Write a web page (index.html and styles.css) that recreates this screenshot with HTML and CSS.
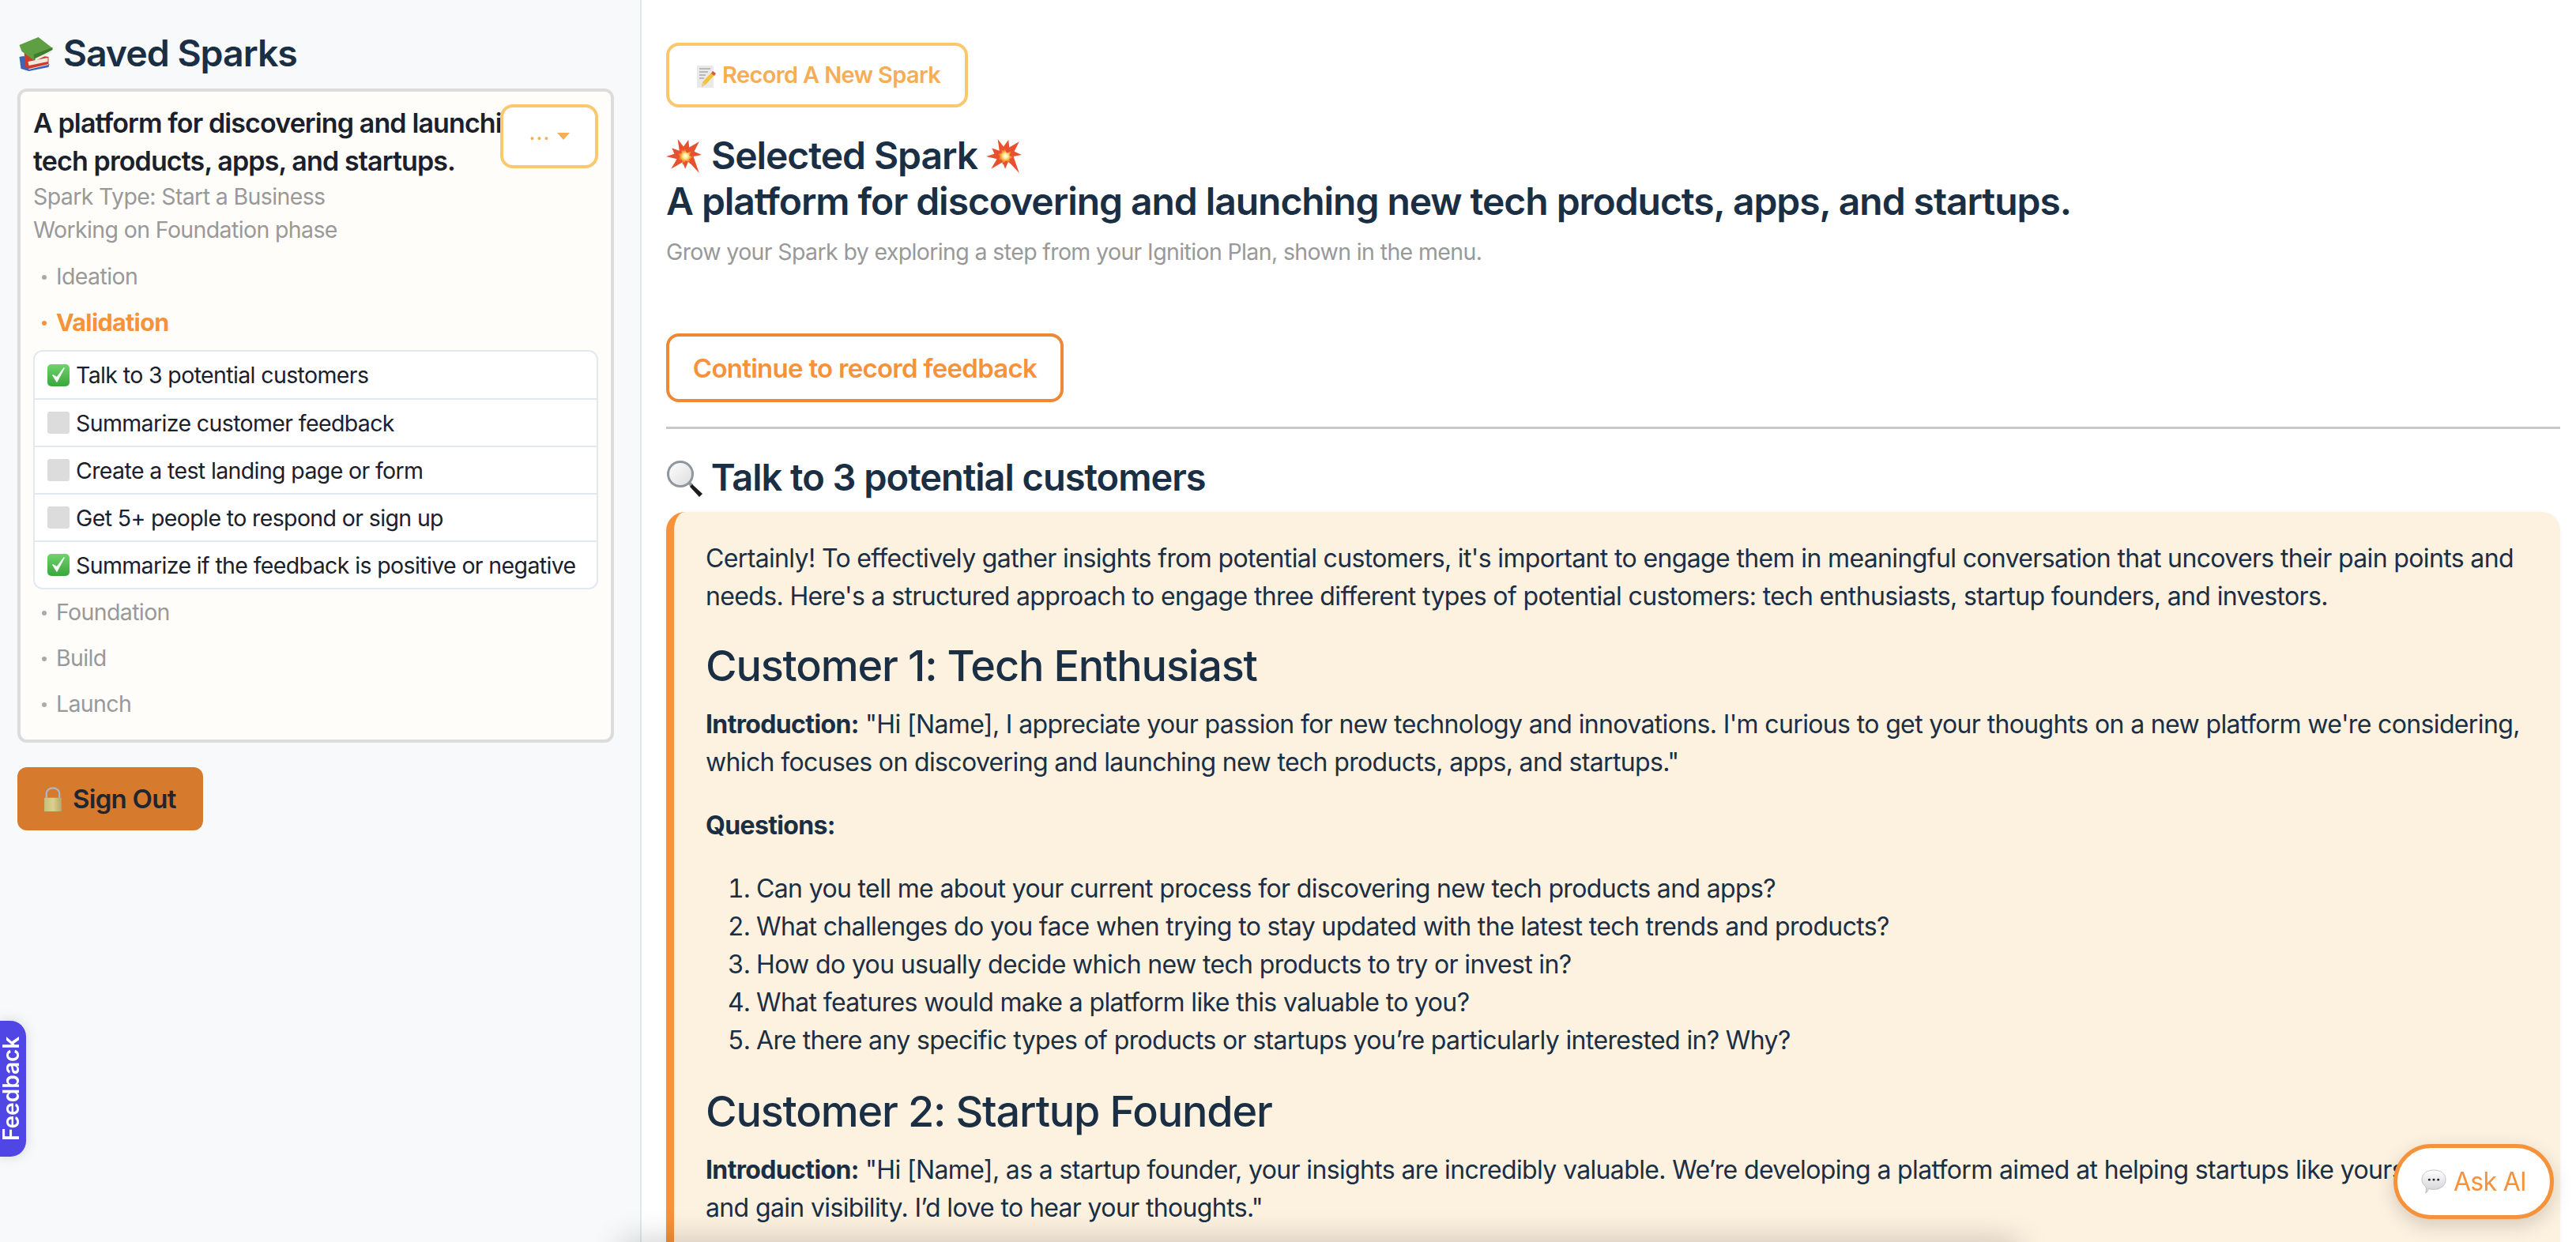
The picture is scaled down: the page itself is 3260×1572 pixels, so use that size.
FILE: index.html
```html
<!DOCTYPE html>
<html lang="en">
<head>
<meta charset="utf-8">
<title>Saved Sparks</title>
<link rel="stylesheet" href="styles.css">
</head>
<body>
<svg class="sprite" width="0" height="0" aria-hidden="true">
  <defs>
    <linearGradient id="brass" x1="0" x2="1" y1="0" y2="0"><stop offset="0" stop-color="#c9bd7c"/><stop offset=".5" stop-color="#dcd08f"/><stop offset="1" stop-color="#b5a765"/></linearGradient>
    <linearGradient id="glass" x1="0" x2="1" y1="0" y2="1"><stop offset="0" stop-color="#ffffff"/><stop offset="1" stop-color="#dcdcdc"/></linearGradient>
    <linearGradient id="green" x1="0" x2="0" y1="0" y2="1"><stop offset="0" stop-color="#6fd36b"/><stop offset="1" stop-color="#39a63b"/></linearGradient>
    <linearGradient id="bubble" x1="0" x2="0" y1="0" y2="1"><stop offset="0" stop-color="#ffffff"/><stop offset="1" stop-color="#cfcfd4"/></linearGradient>
    <radialGradient id="blast"><stop offset="0" stop-color="#ffffff"/><stop offset=".3" stop-color="#ffe98a"/><stop offset=".6" stop-color="#f7932f"/><stop offset="1" stop-color="#dd3f26"/></radialGradient>
    <symbol id="e-books" viewBox="0 0 44 44">
      <path d="M1 26l5-1 33 10-1 4-25 5-10-3z" fill="#3e63b8"/>
      <path d="M12 38l26-5v3l-25 6z" fill="#dfe3ee"/>
      <path d="M7 17l25 8 6 1v9l-25 6-5-3z" fill="#cf3b29"/>
      <path d="M12 32l25-5v5l-24 5z" fill="#efeae0"/>
      <path d="M1 11L25 1l18 14-24 15-15-11z" fill="#5f9f44"/>
      <path d="M19 23L43 14v3l-23 13z" fill="#3f7d2f"/>
      <path d="M21 28l21-10v3L21 31z" fill="#f0ede2"/>
    </symbol>
    <symbol id="e-memo" viewBox="0 0 24 28">
      <rect x="0" y="0" width="21" height="28" fill="#e9e9e9"/>
      <path d="M3 4h14M3 8h11M3 12h8M3 16h6" stroke="#8a8a8a" stroke-width="1"/>
      <path d="M20 7l4 3-13 14-5 3 1-6z" fill="#f3c23a"/>
      <path d="M7 21l4 3-5 3z" fill="#e9c9a0"/>
      <path d="M20 7l4 3-2 3-4-3z" fill="#d65a4a"/>
    </symbol>
    <symbol id="e-blast" viewBox="0 0 44 44">
      <path d="M14 1l7 9 6-8 1 9 12-7-6 12 9 4-10 2 7 20-13-14-4 9-3-8-14 8 7-12L0 22l10-3-3-7 9 3z" fill="#e7512f"/>
      <path d="M22 11l3 7 6-3-3 6 6 2-6 2 2 6-6-4-4 5-1-6-6 1 4-5-4-3 6-1-1-5 4 2z" fill="url(#blast)"/>
    </symbol>
    <symbol id="e-lens" viewBox="0 0 48 48">
      <circle cx="18" cy="18" r="15.5" fill="url(#glass)" stroke="#8f969d" stroke-width="3"/>
      <path d="M29 29l4 4" stroke="#8f969d" stroke-width="4"/>
      <path d="M33 31l13 12-4 4-12-13z" fill="#1d1d1f"/>
    </symbol>
    <symbol id="e-check" viewBox="0 0 28 28">
      <rect x="0" y="0" width="28" height="28" rx="5" fill="url(#green)"/>
      <path d="M7 14l5 8L21 5l-9 12z" fill="#fff" stroke="#fff" stroke-width="1.500" stroke-linejoin="round"/>
    </symbol>
    <symbol id="e-box" viewBox="0 0 28 28">
      <rect x="0" y="0" width="28" height="28" rx="3" fill="#dcdcdc"/>
    </symbol>
    <symbol id="e-lock" viewBox="0 0 26 34">
      <path d="M4 15V9a9 7.500 0 0 1 18 0v6" fill="none" stroke="#a9b8c9" stroke-width="2.500"/>
      <rect x="1" y="15" width="24" height="19" fill="url(#brass)"/>
    </symbol>
    <symbol id="e-chat" viewBox="0 0 34 34">
      <path d="M6 32c2-1 3-3 4-6 2 1 5 1 7 1 9 0 16-5 16-13S26 1 17 1 1 6 1 14c0 4 2 7 5 9 1 3 1 6 0 9z" fill="url(#bubble)" stroke="#b5b5ba" stroke-width=".8"/>
      <circle cx="11" cy="14" r="1.500" fill="#222"/><circle cx="17" cy="14" r="1.500" fill="#222"/><circle cx="23" cy="14" r="1.500" fill="#222"/>
    </symbol>
  </defs>
</svg>

<div class="app">
  <aside class="sidebar">
    <h2 class="side-title"><svg class="emoji-books"><use href="#e-books"/></svg> Saved Sparks</h2>

    <section class="spark-card">
      <button class="menu-btn" type="button"><span class="dots">...</span><span class="caret"></span></button>
      <h3 class="spark-title">A platform for discovering and launching new tech products, apps, and startups.</h3>
      <p class="spark-meta">Spark Type: Start a Business</p>
      <p class="spark-meta">Working on Foundation phase</p>

      <ul class="phases first">
        <li class="phase">Ideation</li>
        <li class="phase active">Validation</li>
      </ul>

      <ul class="steps">
        <li class="step"><svg class="emoji-step"><use href="#e-check"/></svg>Talk to 3 potential customers</li>
        <li class="step"><svg class="emoji-step"><use href="#e-box"/></svg>Summarize customer feedback</li>
        <li class="step"><svg class="emoji-step"><use href="#e-box"/></svg>Create a test landing page or form</li>
        <li class="step"><svg class="emoji-step"><use href="#e-box"/></svg>Get 5+ people to respond or sign up</li>
        <li class="step"><svg class="emoji-step"><use href="#e-check"/></svg>Summarize if the feedback is positive or negative</li>
      </ul>

      <ul class="phases">
        <li class="phase">Foundation</li>
        <li class="phase">Build</li>
        <li class="phase">Launch</li>
      </ul>
    </section>

    <button class="signout" type="button"><svg class="emoji-lock"><use href="#e-lock"/></svg>Sign Out</button>
  </aside>

  <main class="main">
    <button class="record-btn" type="button"><svg class="emoji-memo"><use href="#e-memo"/></svg>Record A New Spark</button>

    <h1 class="selected"><svg class="emoji-blast"><use href="#e-blast"/></svg> Selected Spark <svg class="emoji-blast"><use href="#e-blast"/></svg><br>A platform for discovering and launching new tech products, apps, and startups.</h1>
    <p class="hint">Grow your Spark by exploring a step from your Ignition Plan, shown in the menu.</p>

    <button class="continue-btn" type="button">Continue to record feedback</button>
    <hr class="rule">

    <h2 class="step-title"><svg class="emoji-lens"><use href="#e-lens"/></svg> Talk to 3 potential customers</h2>

    <article class="answer">
      <p>Certainly! To effectively gather insights from potential customers, it's important to engage them in meaningful conversation that uncovers their pain points and needs. Here's a structured approach to engage three different types of potential customers: tech enthusiasts, startup founders, and investors.</p>
      <h2>Customer 1: Tech Enthusiast</h2>
      <p><strong>Introduction:</strong> "Hi [Name], I appreciate your passion for new technology and innovations. I'm curious to get your thoughts on a new platform we're considering, which focuses on discovering and launching new tech products, apps, and startups."</p>
      <p><strong>Questions:</strong></p>
      <ol>
        <li>Can you tell me about your current process for discovering new tech products and apps?</li>
        <li>What challenges do you face when trying to stay updated with the latest tech trends and products?</li>
        <li>How do you usually decide which new tech products to try or invest in?</li>
        <li>What features would make a platform like this valuable to you?</li>
        <li>Are there any specific types of products or startups you’re particularly interested in? Why?</li>
      </ol>
      <h2>Customer 2: Startup Founder</h2>
      <p><strong>Introduction:</strong> "Hi [Name], as a startup founder, your insights are incredibly valuable. We’re developing a platform aimed at helping startups like yours launch and gain visibility. I’d love to hear your thoughts."</p>
    </article>
  </main>
</div>

<div class="dock"></div>
<button class="feedback" type="button">Feedback</button>
<button class="ask" type="button"><svg class="emoji-chat"><use href="#e-chat"/></svg>Ask AI</button>
</body>
</html>
```

FILE: styles.css
```css
* { box-sizing: border-box; letter-spacing: -0.022em; }
html, body { margin: 0; height: 100%; overflow: hidden; }
body { font-family: Inter, "Liberation Sans", sans-serif; color: #1a2e44; background: #fff; }
button { font-family: inherit; cursor: pointer; }
ul, ol { margin: 0; padding: 0; }
.sprite { position: absolute; }
svg { vertical-align: middle; }

.app { display: flex; height: 1572px; }

.sidebar { flex: 0 0 812px; padding: 42px 33px 0 22px; background: #f7f9fb; border-right: 2px solid #e2e8f0; }
.side-title { margin: 0 0 20px; font-size: 46.500px; line-height: 50px; font-weight: 600; color: #1a2e44; }
.emoji-books { width: 47px; height: 44px; margin-top: -6px; }

.spark-card { position: relative; padding: 16px 16px 16px 16px; height: 828px; background: #fffdf9; border: 4px solid #dcdcdc; border-radius: 12px; }
.menu-btn { position: absolute; top: 16px; right: 16px; width: 124px; height: 81px; display: flex; align-items: center; justify-content: center; gap: 8px; background: #fff; border: 4px solid #fbc86f; border-radius: 16px; color: #f6ad55; font-size: 28px; line-height: 1; padding: 0; }
.dots { letter-spacing: 1px; position: relative; top: -6px; }
.caret { width: 0; height: 0; border-left: 8px solid transparent; border-right: 8px solid transparent; border-top: 9px solid #f6ad55; }
.spark-title { margin: 0; font-size: 34px; line-height: 48px; font-weight: 600; letter-spacing: -0.026em; color: #1a202c; }
.spark-meta { margin: 0; font-size: 28.500px; line-height: 42px; color: #999; }

.phases { list-style: none; }
.phases.first { margin-top: 9px; }
.phase { position: relative; height: 58px; padding-left: 29px; font-size: 28.500px; line-height: 58px; color: #999; }
.phase::before { content: ""; position: absolute; left: 11px; top: 27px; width: 6px; height: 6px; border-radius: 50%; background: #aaa; }
.phase.active { color: #f6923a; font-size: 30.500px; font-weight: 700; }
.phase.active::before { background: #f6923a; }

.steps { list-style: none; background: #fff; border: 2px solid #e2e8f0; border-radius: 12px; margin: 6px 0 0; }
.step { display: flex; align-items: center; height: 60px; padding-left: 16px; font-size: 28.500px; color: #1a202c; border-top: 2px solid #e2e8f0; white-space: nowrap; }
.step:first-child { border-top: 0; height: 59px; }
.emoji-step { width: 28px; height: 28px; margin-right: 8px; flex: none; }

.signout { display: flex; align-items: center; margin: 31px 0 0; width: 235px; height: 80px; padding: 0 0 0 33px; background: #d67a2e; border: 0; border-radius: 12px; font-size: 33px; font-weight: 600; color: #1f2630; }
.emoji-lock { width: 24px; height: 31px; margin-right: 13px; }

.main { flex: 1; min-width: 0; padding: 54px 20px 0 31px; overflow: hidden; }
.record-btn { display: block; width: 382px; height: 82px; padding: 0 0 2px 35px; text-align: left; background: #fff; border: 4px solid #fac76c; border-radius: 16px; font-size: 29px; font-weight: 600; color: #f6ad55; }
.emoji-memo { width: 24px; height: 28px; margin-right: 8px; }

.selected { margin: 32px 0 0; font-size: 48px; line-height: 58px; font-weight: 600; color: #1a2e44; }
.emoji-blast { width: 46px; height: 46px; margin-top: -6px; }
.hint { margin: 14px 0 0; font-size: 28.500px; line-height: 42px; color: #999; }

.continue-btn { display: block; margin: 82px 0 0; width: 503px; height: 87px; padding: 0; background: #fff; border: 4px solid #ed8936; border-radius: 16px; font-size: 33px; font-weight: 600; color: #f6923a; }
.rule { margin: 31px 0 0; height: 3px; border: 0; background: #c8c8c8; }

.step-title { margin: 31px 0 0; font-size: 47px; line-height: 60px; font-weight: 600; color: #1a2e44; }
.emoji-lens { width: 48px; height: 48px; margin-top: -4px; margin-right: -2px; }

.answer { margin-top: 14px; padding: 35px 40px 40px; background: #fdf1e0; border-left: 10px solid #f6923a; border-radius: 24px; box-shadow: 0 0 4px rgba(0, 0, 0, .04); font-size: 32px; line-height: 48px; color: #1a2e44; }
.answer p, .answer li, .answer strong { letter-spacing: -0.02em; }
.answer p { margin: 0 0 32px; }
.answer strong { font-weight: 700; }
.answer h2 { margin: 32px 0 18px; font-size: 54px; line-height: 64px; font-weight: 500; color: #1a2e44; }
.answer ol { margin: 0 0 34px; padding-left: 64px; }

.dock { position: fixed; left: 800px; top: 1585px; width: 1740px; height: 40px; box-shadow: 0 0 40px 14px rgba(0, 0, 0, .2); }

.feedback { position: fixed; left: 0; top: 1292px; width: 33px; height: 172px; padding: 0 0 0 4px; writing-mode: vertical-rl; transform: rotate(180deg); display: flex; align-items: center; justify-content: center; background: #4f46e5; border: 0; border-radius: 20px 0 0 20px; box-shadow: 0 0 16px rgba(0, 0, 0, .15); color: #fff; font-size: 28px; line-height: 33px; font-weight: 600; letter-spacing: 0; }

.ask { position: fixed; left: 3029px; top: 1448px; width: 203px; height: 95px; padding: 0; display: flex; align-items: center; justify-content: center; background: #fff; border: 5px solid #f6923a; border-radius: 48px; box-shadow: 0 8px 24px rgba(0, 0, 0, .16); font-size: 32px; color: #f6923a; }
.emoji-chat { width: 32px; height: 32px; margin-right: 9px; }
```
